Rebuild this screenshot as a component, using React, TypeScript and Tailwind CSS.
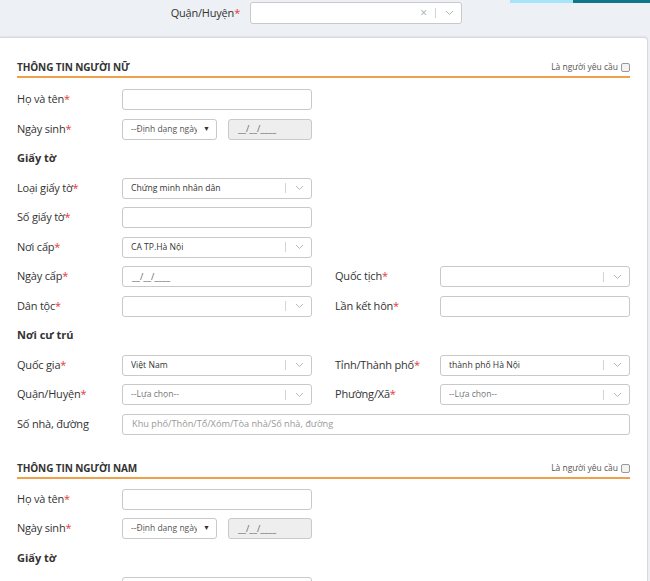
import type { ReactNode } from 'react';

const font = { fontFamily: '"Open Sans", "Noto Sans", Arial, sans-serif' };

function Chevron() {
  return (
    <svg width="9" height="6" viewBox="0 0 9 6" className="text-[#b8b8b8]">
      <path d="M1 1l3.5 3.5L8 1" fill="none" stroke="currentColor" strokeWidth="1" />
    </svg>
  );
}

function Req({ children, req = true }: { children: ReactNode; req?: boolean }) {
  return (
    <div className="flex h-full w-[105px] shrink-0 items-center text-[11px] tracking-[-0.2px] text-[#333]">
      {children}
      {req && <span className="text-[#e53935]">*</span>}
    </div>
  );
}

function TextInput({ wide = false, placeholder }: { wide?: boolean; placeholder?: string }) {
  return (
    <div
      className={`flex h-[21px] items-center rounded-[3px] border border-[#c9c9c9] bg-white px-[9px] text-[9.2px] text-[#999] ${
        wide ? 'flex-1' : 'w-[190px]'
      }`}
    >
      {placeholder}
    </div>
  );
}

function Select({ value, muted = false, w = 'w-[190px]' }: { value?: string; muted?: boolean; w?: string }) {
  return (
    <div className={`flex h-[21px] ${w} items-center rounded-[3px] border border-[#c9c9c9] bg-white pl-[8px] pr-[7px]`}>
      <span className={`flex-1 truncate text-[8.6px] ${muted ? 'text-[#777]' : 'text-[#333]'}`}>{value}</span>
      <span className="mr-[9px] h-[10px] w-px bg-[#d4d4d4]" />
      <Chevron />
    </div>
  );
}

function Mask({ gray = false, w = 'w-[190px]' }: { gray?: boolean; w?: string }) {
  return (
    <div
      className={`flex h-[21px] ${w} items-center rounded-[3px] border border-[#c9c9c9] px-[9px] text-[9px] text-[#666] ${
        gray ? 'bg-[#eeeeee]' : 'bg-white'
      }`}
    >
      __/__/____
    </div>
  );
}

function DateRow() {
  return (
    <div className="flex h-[21px] items-center">
      <Req>Ngày sinh</Req>
      <div className="flex w-[190px] items-center justify-between">
        <div className="flex h-[21px] w-[95px] items-center rounded-[3px] border border-[#c9c9c9] bg-white pl-[8px] pr-[6px] text-[8.5px] text-[#555]">
          <span className="flex-1 overflow-hidden whitespace-nowrap">--Định dạng ngày</span>
          <span className="ml-[6px] text-[7px] text-[#333]">▼</span>
        </div>
        <Mask gray w="w-[84px]" />
      </div>
    </div>
  );
}

function Header({ title }: { title: string }) {
  return (
    <div className="flex items-end justify-between border-b-2 border-[#f0a04b] pb-[1px]">
      <span className="text-[10px] font-bold tracking-[-0.1px] text-[#333]">{title}</span>
      <span className="mb-[1px] flex items-center gap-[3px] text-[8.5px] text-[#555]">
        Là người yêu cầu
        <span className="h-[9px] w-[9px] rounded-[2px] border border-[#999] bg-[#f3f3f3]" />
      </span>
    </div>
  );
}

function Sub({ children }: { children: ReactNode }) {
  return <div className="flex h-[21px] items-center text-[11px] font-bold text-[#333]">{children}</div>;
}

function Row({ children }: { children: ReactNode }) {
  return <div className="flex h-[21px] items-center">{children}</div>;
}

function Pair({ left, right }: { left: ReactNode; right: ReactNode }) {
  return (
    <div className="flex h-[21px] items-center">
      <div className="flex h-full w-[295px] items-center">{left}</div>
      <div className="ml-[23px] flex h-full flex-1 items-center">{right}</div>
    </div>
  );
}

export default function App() {
  return (
    <div className="h-[581px] w-[650px] overflow-hidden bg-[#edf0f4]" style={font}>
      <div className="relative flex h-[37px] items-start">
        <div className="absolute right-0 top-0 flex h-[3px]">
          <div className="w-[63px] bg-[#a6e5f7]" />
          <div className="w-[77px] bg-[#0d7888]" />
        </div>
        <div className="flex w-[240px] justify-end pt-[5px] text-[11px] tracking-[-0.2px] text-[#333]">
          Quận/Huyện<span className="text-[#e53935]">*</span>
        </div>
        <div className="ml-[10px] mt-[2px] flex h-[22px] w-[212px] items-center rounded-[3px] border border-[#c9c9c9] bg-white pr-[7px]">
          <span className="flex-1" />
          <span className="mr-[8px] text-[12px] leading-none text-[#aaa]">×</span>
          <span className="mr-[9px] h-[10px] w-px bg-[#d4d4d4]" />
          <Chevron />
        </div>
      </div>

      <div className="mr-[2px] h-[544px] rounded-tr-[4px] border-r border-t border-[#d6d9dd] bg-white px-[17px] pt-[22px] shadow-[0_-1px_2px_rgba(0,0,0,0.06)]">
        <Header title="THÔNG TIN NGƯỜI NỮ" />
        <div className="mt-[11px] flex flex-col gap-[8.5px]">
          <Row>
            <Req>Họ và tên</Req>
            <TextInput />
          </Row>
          <DateRow />
          <Sub>Giấy tờ</Sub>
          <Row>
            <Req>Loại giấy tờ</Req>
            <Select value="Chứng minh nhân dân" />
          </Row>
          <Row>
            <Req>Số giấy tờ</Req>
            <TextInput />
          </Row>
          <Row>
            <Req>Nơi cấp</Req>
            <Select value="CA TP.Hà Nội" />
          </Row>
          <Pair
            left={
              <>
                <Req>Ngày cấp</Req>
                <Mask />
              </>
            }
            right={
              <>
                <Req>Quốc tịch</Req>
                <Select w="flex-1" />
              </>
            }
          />
          <Pair
            left={
              <>
                <Req>Dân tộc</Req>
                <Select />
              </>
            }
            right={
              <>
                <Req>Lần kết hôn</Req>
                <TextInput wide />
              </>
            }
          />
          <Sub>Nơi cư trú</Sub>
          <Pair
            left={
              <>
                <Req>Quốc gia</Req>
                <Select value="Việt Nam" />
              </>
            }
            right={
              <>
                <Req>Tỉnh/Thành phố</Req>
                <Select w="flex-1" value="thành phố Hà Nội" />
              </>
            }
          />
          <Pair
            left={
              <>
                <Req>Quận/Huyện</Req>
                <Select value="--Lựa chọn--" muted />
              </>
            }
            right={
              <>
                <Req>Phường/Xã</Req>
                <Select w="flex-1" value="--Lựa chọn--" muted />
              </>
            }
          />
          <Row>
            <Req req={false}>Số nhà, đường</Req>
            <TextInput wide placeholder="Khu phố/Thôn/Tổ/Xóm/Tòa nhà/Số nhà, đường" />
          </Row>
        </div>

        <div className="mt-[26px]">
          <Header title="THÔNG TIN NGƯỜI NAM" />
        </div>
        <div className="mt-[10px] flex flex-col gap-[8.5px]">
          <Row>
            <Req>Họ và tên</Req>
            <TextInput />
          </Row>
          <DateRow />
          <Sub>Giấy tờ</Sub>
          <Row>
            <div className="w-[105px] shrink-0" />
            <Select />
          </Row>
        </div>
      </div>
    </div>
  );
}
